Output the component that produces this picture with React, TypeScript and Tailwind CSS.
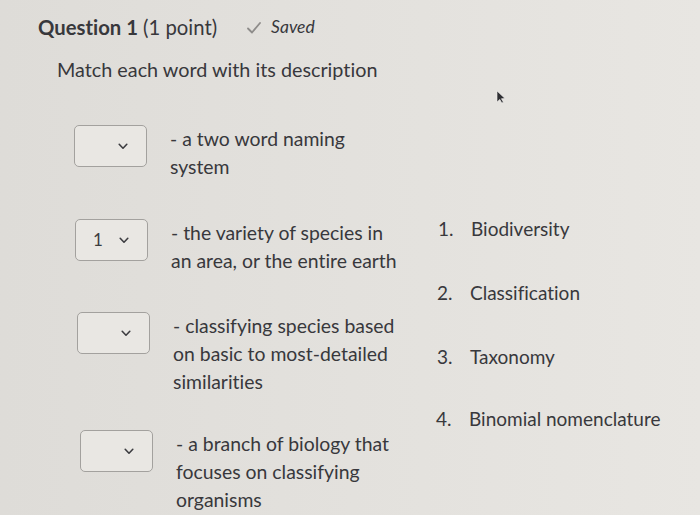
import React from "react";

function Chevron() {
  return (
    <svg width="10" height="7" viewBox="0 0 10 7" className="text-[#3c3c40]">
      <path d="M1.2 1.3 L5 5.2 L8.8 1.3" fill="none" stroke="currentColor" strokeWidth="1.6" strokeLinecap="round" strokeLinejoin="round" />
    </svg>
  );
}

function Select({ value }: { value?: string }) {
  return (
    <div className="w-[73px] h-[42px] shrink-0 rounded-[5px] border border-[#a3a19e] bg-[#e9e7e3] flex items-center pl-[17px] pr-[18px]">
      <span className="flex-1 text-[17px] text-[#3c3c40]">{value ?? ""}</span>
      <Chevron />
    </div>
  );
}

function Row({ value, lines, pl, mt }: { value?: string; lines: string[]; pl: string; mt: string }) {
  return (
    <div className={`flex items-start ${pl} ${mt}`}>
      <Select value={value} />
      <div className="ml-[23px] text-[19.4px] leading-[28px] text-[#38383c]">
        {lines.map((l, i) => (
          <div key={i}>{l}</div>
        ))}
      </div>
    </div>
  );
}

export default function App() {
  return (
    <div
      className="relative w-[700px] h-[515px] overflow-hidden bg-gradient-to-r from-[#dedcd8] via-[#e3e1dd] to-[#e8e6e2] [font-variant-ligatures:none]"
      style={{ fontFamily: "Lato, 'Open Sans', sans-serif" }}
    >
      <div className="pl-[38px] pt-[12px] flex items-center">
        <span className="text-[20.3px] text-[#38383c]">
          <span className="font-bold">Question 1</span> (1 point)
        </span>
        <svg width="16" height="14" viewBox="0 0 16 14" className="ml-[29px] mt-[1px]">
          <path d="M2 7.5 L6 11.5 L14 2" fill="none" stroke="#8e8c8a" strokeWidth="1.8" strokeLinecap="round" strokeLinejoin="round" />
        </svg>
        <span className="ml-[9px] text-[17.5px] italic text-[#38383c]">Saved</span>
      </div>
      <div className="pl-[57px] pt-[13px] text-[19.8px] text-[#38383c]">Match each word with its description</div>

      <div className="flex">
        <div className="flex flex-col w-[420px]">
          <Row pl="pl-[74px]" mt="mt-[40px]" lines={["- a two word naming", "system"]} />
          <Row pl="pl-[75px]" mt="mt-[38px]" value="1" lines={["- the variety of species in", "an area, or the entire earth"]} />
          <Row pl="pl-[77px]" mt="mt-[37px]" lines={["- classifying species based", "on basic to most-detailed", "similarities"]} />
          <Row pl="pl-[80px]" mt="mt-[34px]" lines={["- a branch of biology that", "focuses on classifying", "organisms"]} />
        </div>
        <div className="flex flex-col pt-[130px] text-[19px] text-[#38383c]">
          {["Biodiversity", "Classification", "Taxonomy", "Binomial nomenclature"].map((t, i) => (
            <div key={t} className={`flex leading-[28px] h-[28px] ${i === 0 ? "pl-[18px]" : i === 3 ? "pl-[16px] mt-[34px]" : "pl-[17px] mt-[36px]"}`}>
              <span className="w-[33px]">{i + 1}.</span>
              <span>{t}</span>
            </div>
          ))}
        </div>
      </div>

      <svg className="absolute left-[496px] top-[90px]" width="10" height="14" viewBox="0 0 10 14">
        <path d="M1 1 L1 12 L3.8 9.4 L5.8 13 L7.4 12.2 L5.4 8.7 L9 8.5 Z" fill="#2f2f33" stroke="#f2f0ee" strokeWidth="0.6" />
      </svg>
    </div>
  );
}
